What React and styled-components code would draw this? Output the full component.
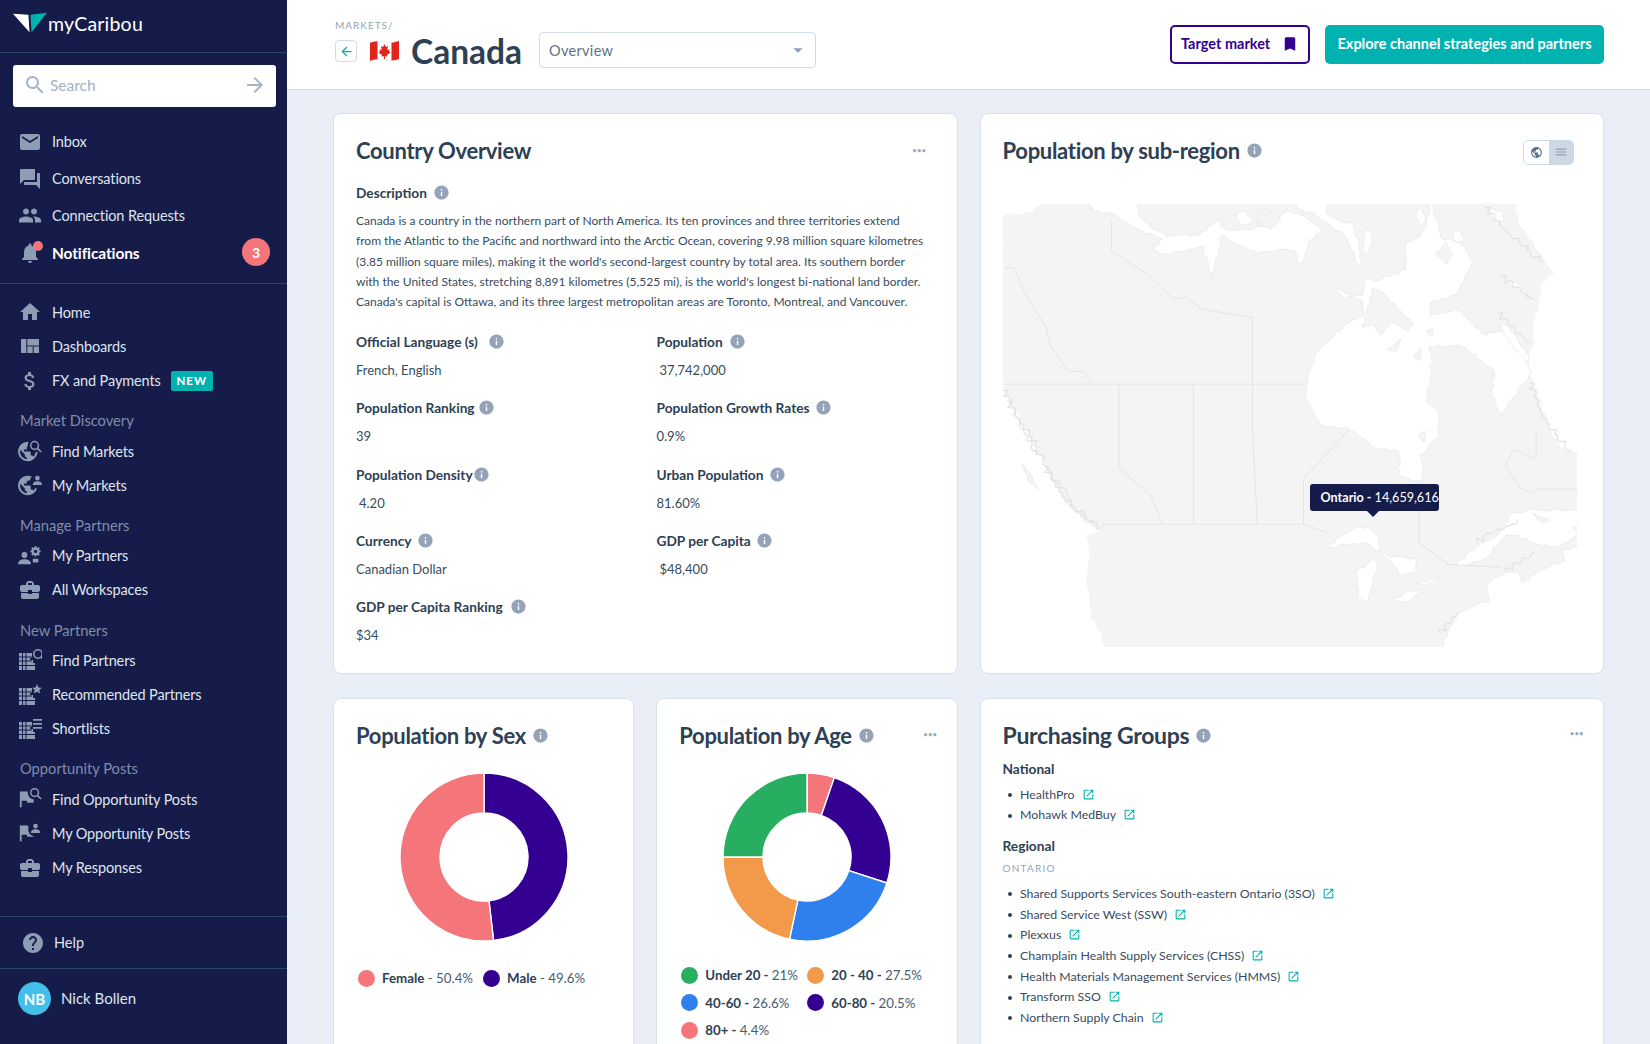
import styled, { createGlobalStyle } from 'styled-components';
import {
  MdEmail, MdForum, MdPeople, MdNotifications, MdHome, MdViewQuilt, MdAttachMoney,
  MdHelp, MdInfo, MdOpenInNew, MdSearch, MdArrowForward, MdArrowBack, MdBookmark,
  MdBusinessCenter, MdPublic, MdMenu, MdArrowDropDown,
} from 'react-icons/md';

const GlobalStyle = createGlobalStyle`
  html, body { margin: 0; padding: 0; height: 100%; overflow: hidden; }
  body { font-family: "Lato", "Noto Sans", sans-serif; background: #e9eef7; color: #2d4054; }
  * { box-sizing: border-box; }
`;

const Page = styled.div`
  display: flex;
  height: 100vh;
  overflow: hidden;
`;

/* sidebar */
const Sidebar = styled.aside`
  width: 287px;
  flex-shrink: 0;
  background: #161c4a;
  color: #dfe5ee;
  display: flex;
  flex-direction: column;
`;

const LogoBar = styled.div`
  height: 53px;
  padding: 0 0 6px 13px;
  display: flex;
  align-items: center;
  gap: 1px;
  border-bottom: 1px solid #2c4360;
`;

const LogoText = styled.span`
  color: #fff;
  font-size: 19.5px;
  letter-spacing: 0.2px;
`;

const SearchWrap = styled.div`
  padding: 12px 11px 16px 13px;
`;

const SearchBox = styled.div`
  height: 42px;
  background: #fff;
  border-radius: 3px;
  display: flex;
  align-items: center;
  padding: 0 9px 2px 10px;
  color: #a3b2c4;
  font-size: 15.5px;
  gap: 3px;
  span { flex: 1; }
`;

const NavGroup = styled.div`
  padding: ${p => p.$padding || '0'};
  border-bottom: ${p => (p.$divider ? '1px solid #2c4360' : 'none')};
`;

const NavRow = styled.div`
  height: ${p => (p.$tall ? '37px' : '34.3px')};
  display: flex;
  align-items: center;
  padding-left: 18px;
  font-size: ${p => (p.$active ? '15.5px' : '14.5px')};
  letter-spacing: -0.12px;
  color: ${p => (p.$active ? '#fff' : '#dfe5ee')};
  font-weight: ${p => (p.$active ? 700 : 400)};
  position: relative;
`;

const NavIcon = styled.span`
  width: 24px;
  height: 24px;
  margin-right: 10px;
  color: #8d9db3;
  display: flex;
  align-items: center;
  justify-content: center;
  position: relative;
  flex-shrink: 0;
`;

const BellDot = styled.i`
  position: absolute;
  top: 0;
  right: -1px;
  width: 10px;
  height: 10px;
  border-radius: 50%;
  background: #f4767b;
`;

const CountBadge = styled.span`
  position: absolute;
  right: 17px;
  top: 4px;
  width: 28px;
  height: 28px;
  border-radius: 50%;
  background: #f4767b;
  color: #fff;
  font-size: 14px;
  font-weight: 700;
  display: flex;
  align-items: center;
  justify-content: center;
`;

const NewTag = styled.span`
  margin-left: 10px;
  height: 20px;
  width: 42px;
  background: #00b2b0;
  border-radius: 2px;
  color: #fff;
  font-size: 11.5px;
  font-weight: 700;
  letter-spacing: 1px;
  display: flex;
  align-items: center;
  justify-content: center;
`;

const NavLabel = styled.div`
  height: 24px;
  margin: 10.5px 0 1.5px;
  padding-left: 20px;
  display: flex;
  align-items: center;
  font-size: 14.7px;
  color: #7f8cab;
`;

const SideFooter = styled.div`
  margin-top: auto;
`;

const HelpRow = styled.div`
  height: 52px;
  border-top: 1px solid #2c4360;
  display: flex;
  align-items: center;
  padding-left: 21px;
  gap: 9px;
  font-size: 14.5px;
  svg { color: #8d9db3; }
`;

const ProfileRow = styled.div`
  height: 76px;
  border-top: 1px solid #2c4360;
  display: flex;
  align-items: flex-start;
  padding: 13px 0 0 18px;
  gap: 10px;
  font-size: 15px;
`;

const ProfileName = styled.span`
  line-height: 32px;
`;

const Avatar = styled.div`
  width: 33px;
  height: 33px;
  border-radius: 50%;
  background: #42c0ea;
  color: #fff;
  font-size: 15px;
  font-weight: 700;
  display: flex;
  align-items: center;
  justify-content: center;
`;

/* main column */
const Main = styled.main`
  flex: 1;
  min-width: 0;
  display: flex;
  flex-direction: column;
`;

const Header = styled.header`
  height: 90px;
  flex-shrink: 0;
  background: #fff;
  border-bottom: 1px solid #d3dde8;
  display: flex;
  justify-content: space-between;
  padding: 19px 46px 0 48px;
`;

const Breadcrumb = styled.div`
  height: 12px;
  line-height: 12px;
  font-size: 10px;
  letter-spacing: 1px;
  color: #94a3b3;
`;

const TitleRow = styled.div`
  height: 40px;
  display: flex;
  align-items: center;
`;

const BackButton = styled.div`
  width: 22px;
  height: 22px;
  border: 1px solid #d3dde8;
  border-radius: 4px;
  color: #00b2b0;
  display: flex;
  align-items: center;
  justify-content: center;
  margin-right: 12px;
`;

const CountryName = styled.h1`
  margin: 0 17px 0 11px;
  font-size: 33.5px;
  line-height: 40px;
  font-weight: 700;
  color: #2d4054;
`;

const SelectBox = styled.div`
  width: 277px;
  height: 36px;
  margin-top: -2px;
  border: 1px solid #d3dde8;
  border-radius: 4px;
  display: flex;
  align-items: center;
  justify-content: space-between;
  padding: 0 6px 0 9px;
  font-size: 14.5px;
  color: #5f7184;
  letter-spacing: 0.3px;
  svg { color: #8d9db3; }
`;

const HeaderActions = styled.div`
  display: flex;
  gap: 15px;
  margin-top: 6px;
`;

const OutlineButton = styled.div`
  width: 140px;
  height: 39px;
  border: 2px solid #330091;
  border-radius: 5px;
  color: #330091;
  font-size: 14.5px;
  font-weight: 700;
  display: flex;
  align-items: center;
  justify-content: space-between;
  padding: 0 9px 2px 9px;
`;

const SolidButton = styled.div`
  width: 279px;
  height: 39px;
  background: #00b2b0;
  border-radius: 5px;
  color: #fff;
  font-size: 14.5px;
  font-weight: 700;
  display: flex;
  align-items: center;
  justify-content: center;
  padding-bottom: 2px;
`;

const Content = styled.div`
  flex: 1;
  min-height: 0;
  overflow: hidden;
  padding: 23px 46px 0 46px;
  display: grid;
  grid-template-columns: repeat(4, 1fr);
  grid-template-rows: 561px 420px;
  gap: 24px 22px;
`;

const Card = styled.section`
  grid-column: span ${p => p.$span || 1};
  background: #fff;
  border: 1px solid #d9e2ec;
  border-radius: 8px;
  padding: 21px 22px 0;
  position: relative;
`;

const TitleLine = styled.div`
  display: flex;
  align-items: center;
  justify-content: space-between;
  height: 30px;
`;

const CardTitle = styled.h2`
  margin: 0;
  font-size: ${p => p.$size || '22px'};
  letter-spacing: -0.3px;
  font-weight: 700;
  color: #2d4054;
  display: flex;
  align-items: center;
  gap: 6px;
  white-space: nowrap;
`;

const Dots = styled.span`
  color: #9aa8b8;
  font-size: 7px;
  letter-spacing: 0.6px;
  font-weight: 700;
  margin-right: ${p => p.$right || '8px'};
  margin-bottom: ${p => p.$lift || '0'};
`;

const InfoIcon = styled(MdInfo)`
  color: #94a3b8;
  flex-shrink: 0;
`;

const FieldLabel = styled.div`
  height: 22px;
  display: flex;
  align-items: center;
  gap: ${p => p.$gap || '8px'};
  font-size: 13.7px;
  font-weight: 700;
  color: #2d4054;
  white-space: nowrap;
`;

const Paragraph = styled.p`
  margin: 7px 0 0;
  font-size: 12px;
  line-height: 20.3px;
  color: #384b5e;
  white-space: nowrap;
`;

const DescriptionLabel = styled(FieldLabel)`
  margin-top: 15px;
  height: 24px;
`;

const FieldGrid = styled.div`
  margin-top: 18px;
  display: grid;
  grid-template-columns: 300.5px 1fr;
  row-gap: 15.8px;
`;

const FieldValue = styled.div`
  margin-top: 6.5px;
  height: 22px;
  line-height: 22px;
  font-size: 13px;
  color: #384b5e;
  padding-left: ${p => (p.$indent ? '3px' : '0')};
`;

const ViewToggle = styled.div`
  width: 51px;
  height: 25px;
  margin-top: 4px;
  border: 1px solid #ccd9e4;
  border-radius: 5px;
  display: flex;
  overflow: hidden;
  margin-right: 7px;
`;

const ToggleSide = styled.span`
  flex: 1;
  display: flex;
  align-items: center;
  justify-content: center;
  color: ${p => (p.$on ? '#5d7390' : '#8d9db3')};
  background: ${p => (p.$on ? '#fff' : '#ccd9e4')};
`;

const MapFrame = styled.div`
  position: relative;
  width: 574px;
  height: 443px;
  margin-top: 39px;
`;

const Tooltip = styled.div`
  position: absolute;
  left: 307px;
  top: 280px;
  width: 129px;
  height: 27px;
  background: #161c4a;
  border-radius: 3px;
  color: #fff;
  font-size: 12.6px;
  line-height: 27px;
  padding-left: 11px;
  white-space: nowrap;
  b { font-weight: 700; }
  &::after {
    content: '';
    position: absolute;
    left: 57px;
    bottom: -6px;
    border: 6px solid transparent;
    border-bottom: 0;
    border-top-color: #161c4a;
  }
`;

const DonutWrap = styled.div`
  margin-top: 22px;
  display: flex;
  justify-content: center;
`;

const SexLegend = styled.div`
  margin-top: 26px;
  display: flex;
  gap: 10px;
  padding-left: 2px;
`;

const AgeLegend = styled.div`
  margin-top: 23px;
  padding-left: 2px;
  display: grid;
  grid-template-columns: 126px 1fr;
  row-gap: 7.5px;
`;

const LegendItem = styled.div`
  height: 20px;
  display: flex;
  align-items: center;
  gap: 7px;
  font-size: 13.3px;
  color: #4a5c6e;
  white-space: nowrap;
  b { color: #2d4054; font-weight: 700; }
`;

const LegendDot = styled.i`
  width: 17px;
  height: 17px;
  border-radius: 50%;
  background: ${p => p.$color};
  flex-shrink: 0;
`;

const GroupTitle = styled.div`
  height: 22px;
  line-height: 22px;
  margin-top: ${p => p.$top};
  font-size: 13.7px;
  font-weight: 700;
  color: #2d4054;
`;

const RegionLabel = styled.div`
  margin-top: 3px;
  height: 16px;
  line-height: 16px;
  font-size: 10px;
  letter-spacing: 1.2px;
  color: #94a3b8;
`;

const LinkList = styled.ul`
  list-style: none;
  margin: ${p => p.$top} 0 0;
  padding: 0;
`;

const LinkItem = styled.li`
  height: 20.67px;
  display: flex;
  align-items: center;
  gap: 7px;
  padding-left: 17.5px;
  font-size: 12.35px;
  color: #384b5e;
  white-space: nowrap;
  position: relative;
  &::before {
    content: '';
    position: absolute;
    left: 5px;
    top: 9px;
    width: 4px;
    height: 4px;
    border-radius: 50%;
    background: #2d4054;
  }
  svg { color: #00b2b0; }
`;

const LogoMark = () => (
  <svg width="34" height="22" viewBox="0 0 33 20">
    <path d="M0 1 L15 2 L16 19 Z" fill="#fff" />
    <path d="M17 2 L33 0 L18 19 Z" fill="#00b2b0" />
  </svg>
);

const GLOBE = 'M12 2C6.48 2 2 6.48 2 12s4.48 10 10 10 10-4.48 10-10S17.52 2 12 2zm-1 17.93c-3.95-.49-7-3.85-7-7.93 0-.62.08-1.21.21-1.79L9 15v1c0 1.1.9 2 2 2v1.93zm6.9-2.54c-.26-.81-1-1.39-1.9-1.39h-1v-3c0-.55-.45-1-1-1H8v-2h2c.55 0 1-.45 1-1V7h2c1.1 0 2-.9 2-2v-.41c2.93 1.19 5 4.06 5 7.41 0 2.08-.8 3.97-2.1 5.39z';
const FLAG = 'M14.4 6L14 4H5v17h2v-7h5.6l.4 2h7V6z';

const Lens = ({ x, y, bg = true }) => (
  <g transform={`translate(${x} ${y})`}>
    {bg && <circle cx="5" cy="5" r="7.5" fill="#161c4a" />}
    <circle cx="5" cy="5" r="4.2" fill="none" stroke="currentColor" strokeWidth="1.6" />
    <path d="M8 8 L12 12" stroke="currentColor" strokeWidth="1.8" />
  </g>
);

const Person = ({ x, y }) => (
  <g transform={`translate(${x} ${y})`}>
    <circle cx="6" cy="6" r="8" fill="#161c4a" />
    <circle cx="6" cy="2.5" r="2.6" fill="currentColor" />
    <path d="M1 10c0-3 2.5-4 5-4s5 1 5 4z" fill="currentColor" />
  </g>
);

const Building = ({ extra }) => (
  <svg width="24" height="24" viewBox="0 0 24 24" fill="currentColor">
    <path d="M1 5h13v5h-2v2h3v3h2v7H1z" />
    <path d="M4.5 5v17M8 5v17M1 9h13M1 13h13M1 17.500h16" stroke="#161c4a" strokeWidth="1" />
    {extra}
  </svg>
);

const FindMarketsIcon = () => (
  <svg width="26" height="24" viewBox="0 0 26 24" fill="currentColor">
    <path d={GLOBE} transform="translate(-2 0) scale(1.05)" />
    <Lens x="13" y="1" />
  </svg>
);

const MyMarketsIcon = () => (
  <svg width="26" height="24" viewBox="0 0 26 24" fill="currentColor">
    <path d={GLOBE} transform="translate(-2 0) scale(1.05)" />
    <Person x="15" y="2" />
  </svg>
);

const MyPartnersIcon = () => (
  <svg width="26" height="24" viewBox="0 0 26 24" fill="currentColor">
    <circle cx="7" cy="11" r="3.200" />
    <path d="M0 21c0-4 3-5.500 7-5.500s7 1.500 7 5.500z" />
    <circle cx="19" cy="7" r="4.500" />
    <path d="M19 1.500v11M13.500 7h11M15 3l8 8M23 3l-8 8" stroke="currentColor" strokeWidth="2" />
    <circle cx="19" cy="7" r="1.800" fill="#161c4a" />
    <path d="M16 15h6v4h-6z" />
  </svg>
);

const FindPostsIcon = () => (
  <svg width="26" height="24" viewBox="0 0 26 24" fill="currentColor">
    <path d={FLAG} transform="translate(-3 0)" />
    <Lens x="13" y="0" />
  </svg>
);

const MyPostsIcon = () => (
  <svg width="26" height="24" viewBox="0 0 26 24" fill="currentColor">
    <path d={FLAG} transform="translate(-3 0)" />
    <Person x="13" y="2" />
  </svg>
);

const FlagCanada = () => (
  <svg width="31" height="22" viewBox="0 0 31 22">
    <path d="M1 3 C8 0 12 1 16 2 C22 3 26 2 30 1 L30 19 C25 20 21 21 16 20 C11 19 6 19 1 21 Z" fill="#fff" stroke="#e0e0e0" strokeWidth="0.6" />
    <path d="M1 3 C3 2 6 1.500 8.500 1.300 L8.500 19.300 C6 19.500 3 20 1 21 Z" fill="#e1241c" />
    <path d="M22.500 2.700 C25 2.500 28 1.800 30 1 L30 19 C28 19.700 25 20.300 22.500 20.600 Z" fill="#e1241c" />
    <path d="M15.500 4 L17 7 L19 6 L18.300 10 L20.500 9.500 L20 11.500 L21.500 12.500 L18 15 L18.500 16.500 L16 16.200 L16 19 L15 19 L15 16.200 L12.500 16.500 L13 15 L9.500 12.500 L11 11.500 L10.500 9.500 L12.700 10 L12 6 L14 7 Z" fill="#e1241c" />
  </svg>
);

const polar = (cx, cy, r, deg) => {
  const a = ((deg - 90) * Math.PI) / 180;
  return `${(cx + r * Math.cos(a)).toFixed(2)} ${(cy + r * Math.sin(a)).toFixed(2)}`;
};

const arcPath = (from, to) => {
  const large = to - from > 180 ? 1 : 0;
  return `M${polar(85, 85, 84, from)} A84 84 0 ${large} 1 ${polar(85, 85, 84, to)} L${polar(85, 85, 44, to)} A44 44 0 ${large} 0 ${polar(85, 85, 44, from)} Z`;
};

const Donut = ({ slices }) => (
  <svg width="170" height="170" viewBox="0 0 170 170">
    {slices.map(s => (
      <path key={s.color} d={arcPath(s.from, s.to)} fill={s.color} stroke="#fff" strokeWidth="1.4" />
    ))}
  </svg>
);

const PINK = '#f4767b';
const PURPLE = '#330091';
const GREEN = '#27ae60';
const ORANGE = '#f2994a';
const BLUE = '#2f80ed';

const sexSlices = [
  { color: PURPLE, from: 0, to: 173.5 },
  { color: PINK, from: 173.5, to: 360 },
];

const ageSlices = [
  { color: PINK, from: 0, to: 19 },
  { color: PURPLE, from: 19, to: 108 },
  { color: BLUE, from: 108, to: 192 },
  { color: ORANGE, from: 192, to: 270 },
  { color: GREEN, from: 270, to: 360 },
];

const ageLegend = [
  { color: GREEN, name: 'Under 20', value: '21%' },
  { color: ORANGE, name: '20 - 40', value: '27.5%' },
  { color: BLUE, name: '40-60', value: '26.6%' },
  { color: PURPLE, name: '60-80', value: '20.5%' },
  { color: PINK, name: '80+', value: '4.4%' },
];

const fields = [
  { label: 'Official Language (s)', value: 'French, English', gap: '10px' },
  { label: 'Population', value: '37,742,000', indent: true, gap: '6.5px' },
  { label: 'Population Ranking', value: '39', gap: '3.5px' },
  { label: 'Population Growth Rates', value: '0.9%', gap: '5px' },
  { label: 'Population Density', value: '4.20', indent: true, gap: '0' },
  { label: 'Urban Population', value: '81.60%', gap: '6px' },
  { label: 'Currency', value: 'Canadian Dollar', gap: '5px' },
  { label: 'GDP per Capita', value: '$48,400', indent: true, gap: '5px' },
  { label: 'GDP per Capita Ranking', value: '$34', gap: '7px' },
];

const nationalGroups = ['HealthPro', 'Mohawk MedBuy'];
const regionalGroups = [
  'Shared Supports Services South-eastern Ontario (3SO)',
  'Shared Service West (SSW)',
  'Plexxus',
  'Champlain Health Supply Services (CHSS)',
  'Health Materials Management Services (HMMS)',
  'Transform SSO',
  'Northern Supply Chain',
];

// coastline points in reference-crop units; roughen() below frays them
const LAND = [[79,292],[110,288],[150,282],[170,262],[200,240],[1330,240],[1345,320],[1400,400],[1430,450],[1395,480],[1390,535],[1378,590],[1380,640],[1365,690],[1370,730],[1395,800],[1420,880],[1450,935],[1500,950],[1500,1500],[335,1500],[320,1440],[295,1400],[282,1300],[292,1220],[280,1170],[312,1160],[270,1120],[230,1080],[190,1000],[165,940],[130,870],[100,810],[70,760]];

const WATER = [
  [[285,240],[300,280],[345,285],[380,310],[420,335],[470,355],[445,385],[480,398],[530,385],[570,375],[580,420],[592,465],[600,420],[615,345],[650,370],[700,395],[760,385],[795,390],[800,425],[815,420],[830,360],[860,330],[810,290],[770,280],[730,320],[680,330],[625,330],[600,305],[560,345],[480,350],[430,310],[410,285],[410,240]],
  [[790,240],[880,240],[870,285],[900,305],[935,315],[950,370],[960,428],[945,420],[915,345],[880,320],[840,285],[800,275]],
  [[1130,240],[1115,320],[1100,350],[1065,370],[1065,440],[1000,470],[970,465],[960,510],[920,520],[885,490],[960,525],[965,560],[920,590],[880,630],[850,665],[825,730],[820,790],[860,870],[925,875],[990,930],[1048,940],[1050,1005],[1080,1020],[1108,1020],[1100,950],[1150,900],[1145,830],[1115,800],[1130,720],[1125,650],[1200,650],[1250,690],[1280,715],[1278,790],[1300,835],[1360,745],[1372,720],[1350,670],[1300,610],[1260,620],[1230,590],[1190,550],[1125,565],[1125,530],[1190,510],[1230,420],[1200,370],[1150,350],[1140,300]],
  [[1305,458],[1340,480],[1370,530],[1390,535],[1350,510]],
  [[1295,592],[1320,600],[1368,680],[1365,700],[1320,640]],
  [[1190,1250],[1240,1200],[1290,1170],[1325,1110],[1380,1100],[1500,1100],[1500,1160],[1470,1180],[1440,1200],[1400,1200],[1370,1190],[1340,1170],[1310,1170],[1260,1235],[1200,1258]],
  [[1500,1200],[1450,1210],[1455,1240],[1400,1265],[1350,1300],[1340,1270],[1320,1270],[1265,1300],[1270,1350],[1220,1370],[1190,1390],[1170,1430],[1150,1500],[1500,1500]],
  [[870,1205],[905,1175],[940,1150],[975,1148],[1000,1175],[1005,1215],[960,1190]],
  [[945,1270],[990,1235],[998,1250],[985,1300],[975,1350],[950,1345]],
  [[1005,1225],[1050,1230],[1090,1235],[1092,1270],[1050,1282],[1030,1240]],
  [[1030,1352],[1070,1325],[1110,1320],[1070,1355]],
  [[1095,1302],[1150,1285],[1122,1305]],
  [[1100,262],[1115,300],[1100,320],[1090,290]],
  [[650,290],[675,280],[690,310],[660,320]],
  [[700,295],[730,285],[745,300],[715,315]],
  [[1180,340],[1200,335],[1210,360],[1190,365]],
  [[965,330],[985,340],[975,400],[960,385]],
  [[1270,280],[1300,275],[1305,310],[1280,305]],
];

const ISLANDS = [
  [[960,600],[985,490],[1005,500],[1050,550],[1085,590],[1070,610],[1030,585],[1005,620],[985,590]],
  [[1020,662],[1055,630],[1042,665]],
  [[1085,682],[1100,655],[1102,690]],
  [[1140,400],[1165,365],[1180,400],[1165,425]],
  [[1115,610],[1135,605],[1130,625]],
  [[1375,1110],[1420,1130],[1400,1137]],
  [[1475,1150],[1500,1140],[1500,1180]],
  [[125,975],[145,1000],[165,1045],[140,1020]],
  [[1095,895],[1115,885],[1110,915]],
  [[720,270],[760,300],[735,330],[700,310]],
];

const BORDERS = 'M345 305 L345 390 430 450 495 518 530 518 565 548 690 573 690 755 M79 755 L820 755 M79 436 L107 436 130 500 185 600 195 650 240 720 280 720 295 755 M363 755 L363 985 440 1060 470 1140 M545 755 L545 1140 M690 755 L690 880 702 1140 M320 1140 L815 1140 L815 1015 928 878 M1098 1020 L1098 1190 1170 1250 1300 1258 M1385 1043 L1485 1043 M815 1140 L880 1165 M1385 1043 L1375 1055 1345 1040 1310 980 1330 935 1385 960 1385 880';

const FUZZ = [
  [[80,770],[110,830],[130,870],[150,900],[170,950],[200,1000],[240,1070],[280,1120],[320,1150]],
  [[90,800],[120,860],[140,900],[160,950]],
  [[180,980],[215,1040],[255,1100],[300,1140]],
  [[1240,1190],[1270,1165],[1340,1130]],
  [[1300,460],[1380,520]],
  [[1260,270],[1320,340],[1400,420]],
  [[1290,560],[1370,640]],
  [[1370,750],[1410,860],[1470,940]],
  [[1150,1440],[1190,1385]],
  [[1310,1270],[1380,1215]],
];

// frays a straight segment list into a natural-looking coastline
const roughen = (points, amp = 5, step = 14, closed = true) => {
  let seed = 7;
  const noise = () => {
    seed = (seed * 16807) % 2147483647;
    return (seed / 2147483647) * 2 - 1;
  };
  const out = [];
  const count = closed ? points.length : points.length - 1;
  for (let i = 0; i < count; i += 1) {
    const [x1, y1] = points[i];
    const [x2, y2] = points[(i + 1) % points.length];
    const len = Math.hypot(x2 - x1, y2 - y1);
    const parts = Math.max(1, Math.round(len / step));
    for (let j = 0; j < parts; j += 1) {
      const t = j / parts;
      const n = j === 0 ? 0 : noise() * amp;
      out.push(`${(x1 + (x2 - x1) * t - ((y2 - y1) / len) * n).toFixed(1)} ${(y1 + (y2 - y1) * t + ((x2 - x1) / len) * n).toFixed(1)}`);
    }
  }
  if (!closed) out.push(points[points.length - 1].join(' '));
  return `M${out.join(' L')}${closed ? ' Z' : ''}`;
};

const CanadaMap = () => (
  <svg width="574" height="443" viewBox="79 260 1406 1217" preserveAspectRatio="none">
    <path d={roughen(LAND, 4)} fill="#f4f4f4" />
    {WATER.map(p => <path key={p[0].join()} d={roughen(p, 4, 11)} fill="#fff" stroke="#e8e8e8" strokeWidth="0.8" vectorEffect="non-scaling-stroke" />)}
    {ISLANDS.map(p => <path key={p[0].join()} d={roughen(p, 2.5, 9)} fill="#f4f4f4" stroke="#e8e8e8" strokeWidth="0.8" vectorEffect="non-scaling-stroke" />)}
    <path d={BORDERS} fill="none" stroke="#e4e4e4" strokeWidth="1" vectorEffect="non-scaling-stroke" />
    {FUZZ.map(p => <path key={p[0].join()} d={roughen(p, 9, 8, false)} fill="none" stroke="#e2e2e2" strokeWidth="1.2" vectorEffect="non-scaling-stroke" />)}
  </svg>
);

const App = () => (
  <Page>
    <GlobalStyle />
    <Sidebar>
      <LogoBar>
        <LogoMark />
        <LogoText>myCaribou</LogoText>
      </LogoBar>
      <SearchWrap>
        <SearchBox>
          <MdSearch size={24} />
          <span>Search</span>
          <MdArrowForward size={24} />
        </SearchBox>
      </SearchWrap>
      <NavGroup $divider $padding="0 0 12px">
        <NavRow $tall><NavIcon><MdEmail size={24} /></NavIcon>Inbox</NavRow>
        <NavRow $tall><NavIcon><MdForum size={24} /></NavIcon>Conversations</NavRow>
        <NavRow $tall><NavIcon><MdPeople size={25} /></NavIcon>Connection Requests</NavRow>
        <NavRow $tall $active>
          <NavIcon><MdNotifications size={26} /><BellDot /></NavIcon>
          Notifications
          <CountBadge>3</CountBadge>
        </NavRow>
      </NavGroup>
      <NavGroup $padding="11px 0 0">
        <NavRow><NavIcon><MdHome size={24} /></NavIcon>Home</NavRow>
        <NavRow><NavIcon><MdViewQuilt size={24} /></NavIcon>Dashboards</NavRow>
        <NavRow><NavIcon><MdAttachMoney size={24} /></NavIcon>FX and Payments<NewTag>NEW</NewTag></NavRow>
        <NavLabel>Market Discovery</NavLabel>
        <NavRow><NavIcon><FindMarketsIcon /></NavIcon>Find Markets</NavRow>
        <NavRow><NavIcon><MyMarketsIcon /></NavIcon>My Markets</NavRow>
        <NavLabel>Manage Partners</NavLabel>
        <NavRow><NavIcon><MyPartnersIcon /></NavIcon>My Partners</NavRow>
        <NavRow><NavIcon><MdBusinessCenter size={24} /></NavIcon>All Workspaces</NavRow>
        <NavLabel>New Partners</NavLabel>
        <NavRow><NavIcon><Building extra={<Lens x="15" y="1" bg={false} />} /></NavIcon>Find Partners</NavRow>
        <NavRow><NavIcon><Building extra={<path d="M19 1l1.500 3.500 3.500.3-2.700 2.300.9 3.500-3.200-1.900-3.200 1.900.9-3.500-2.700-2.300 3.500-.3z" />} /></NavIcon>Recommended Partners</NavRow>
        <NavRow><NavIcon><Building extra={<path d="M15 2h9v1.800h-9zM15 6h9v1.800h-9zM15 10h9v1.800h-9z" />} /></NavIcon>Shortlists</NavRow>
        <NavLabel>Opportunity Posts</NavLabel>
        <NavRow><NavIcon><FindPostsIcon /></NavIcon>Find Opportunity Posts</NavRow>
        <NavRow><NavIcon><MyPostsIcon /></NavIcon>My Opportunity Posts</NavRow>
        <NavRow><NavIcon><MdBusinessCenter size={24} /></NavIcon>My Responses</NavRow>
      </NavGroup>
      <SideFooter>
        <HelpRow><MdHelp size={24} />Help</HelpRow>
        <ProfileRow>
          <Avatar>NB</Avatar>
          <ProfileName>Nick Bollen</ProfileName>
        </ProfileRow>
      </SideFooter>
    </Sidebar>

    <Main>
      <Header>
        <div>
          <Breadcrumb>MARKETS/</Breadcrumb>
          <TitleRow>
            <BackButton><MdArrowBack size={15} /></BackButton>
            <FlagCanada />
            <CountryName>Canada</CountryName>
            <SelectBox>Overview<MdArrowDropDown size={22} /></SelectBox>
          </TitleRow>
        </div>
        <HeaderActions>
          <OutlineButton>Target market<MdBookmark size={18} /></OutlineButton>
          <SolidButton>Explore channel strategies and partners</SolidButton>
        </HeaderActions>
      </Header>

      <Content>
        <Card $span={2}>
          <TitleLine>
            <CardTitle>Country Overview</CardTitle>
            <Dots>•••</Dots>
          </TitleLine>
          <DescriptionLabel $gap="6px">Description<InfoIcon size={17} /></DescriptionLabel>
          <Paragraph>
            Canada is a country in the northern part of North America. Its ten provinces and three territories extend<br />
            from the Atlantic to the Pacific and northward into the Arctic Ocean, covering 9.98 million square kilometres<br />
            (3.85 million square miles), making it the world's second-largest country by total area. Its southern border<br />
            with the United States, stretching 8,891 kilometres (5,525 mi), is the world's longest bi-national land border.<br />
            Canada's capital is Ottawa, and its three largest metropolitan areas are Toronto, Montreal, and Vancouver.
          </Paragraph>
          <FieldGrid>
            {fields.map(f => (
              <div key={f.label}>
                <FieldLabel $gap={f.gap}>{f.label}<InfoIcon size={17} /></FieldLabel>
                <FieldValue $indent={f.indent}>{f.value}</FieldValue>
              </div>
            ))}
          </FieldGrid>
        </Card>

        <Card $span={2}>
          <TitleLine>
            <CardTitle>Population by sub-region <InfoIcon size={17} /></CardTitle>
            <ViewToggle>
              <ToggleSide $on><MdPublic size={13} /></ToggleSide>
              <ToggleSide><MdMenu size={14} /></ToggleSide>
            </ViewToggle>
          </TitleLine>
          <MapFrame>
            <CanadaMap />
            <Tooltip><b>Ontario - </b>14,659,616</Tooltip>
          </MapFrame>
        </Card>

        <Card>
          <TitleLine>
            <CardTitle>Population by Sex <InfoIcon size={17} /></CardTitle>
          </TitleLine>
          <DonutWrap><Donut slices={sexSlices} /></DonutWrap>
          <SexLegend>
            <LegendItem><LegendDot $color={PINK} /><span><b>Female</b> - 50.4%</span></LegendItem>
            <LegendItem><LegendDot $color={PURPLE} /><span><b>Male</b> - 49.6%</span></LegendItem>
          </SexLegend>
        </Card>

        <Card>
          <TitleLine>
            <CardTitle>Population by Age <InfoIcon size={17} /></CardTitle>
            <Dots $right="-3px" $lift="2px">•••</Dots>
          </TitleLine>
          <DonutWrap><Donut slices={ageSlices} /></DonutWrap>
          <AgeLegend>
            {ageLegend.map(a => (
              <LegendItem key={a.name}>
                <LegendDot $color={a.color} />
                <span><b>{a.name} - </b>{a.value}</span>
              </LegendItem>
            ))}
          </AgeLegend>
        </Card>

        <Card $span={2}>
          <TitleLine>
            <CardTitle $size="23px">Purchasing Groups <InfoIcon size={17} /></CardTitle>
            <Dots $right="-3px" $lift="4px">•••</Dots>
          </TitleLine>
          <GroupTitle $top="8px">National</GroupTitle>
          <LinkList $top="4px">
            {nationalGroups.map(n => <LinkItem key={n}>{n}<MdOpenInNew size={13} /></LinkItem>)}
          </LinkList>
          <GroupTitle $top="10px">Regional</GroupTitle>
          <RegionLabel>ONTARIO</RegionLabel>
          <LinkList $top="7px">
            {regionalGroups.map(n => <LinkItem key={n}>{n}<MdOpenInNew size={13} /></LinkItem>)}
          </LinkList>
        </Card>
      </Content>
    </Main>
  </Page>
);

export default App;
